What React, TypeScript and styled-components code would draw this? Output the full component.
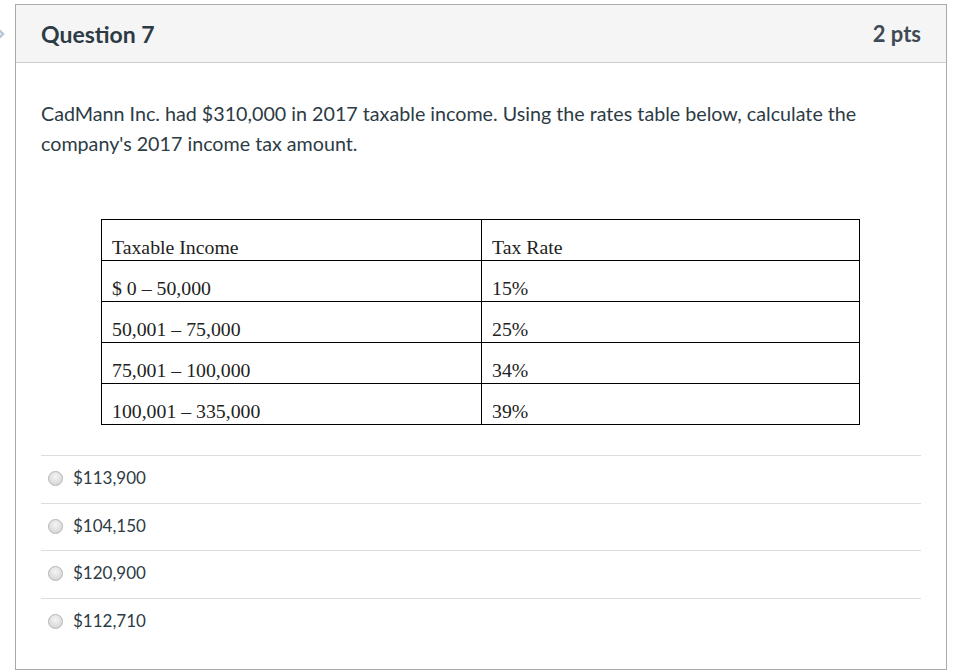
import React from "react";
import styled, { createGlobalStyle } from "styled-components";

const Global = createGlobalStyle`
  html, body { margin: 0; padding: 0; background: #fff; }
  body { font-family: Lato, "Open Sans", sans-serif; color: #2d3b45; }
`;

const Page = styled.div`
  position: relative;
  padding: 4px 19px 0 15px;
  width: 966px;
  box-sizing: border-box;
`;

const Marker = styled.svg`
  position: absolute;
  left: -5px;
  top: 26px;
`;

const Card = styled.div`
  border: 1px solid #aaaaaa;
  width: 932px;
  height: 666px;
  box-sizing: border-box;
  display: flex;
  flex-direction: column;
`;

const Header = styled.div`
  height: 57px;
  background: #f5f5f5;
  border-bottom: 1px solid #c7cdd1;
  display: flex;
  align-items: center;
  justify-content: space-between;
  padding: 0 25px;
  box-sizing: content-box;
`;

const Title = styled.h2`
  margin: 0;
  font-family: Lato, sans-serif;
  font-weight: 700;
  font-size: 23px;
  color: #2d3b45;
`;

const Points = styled.span`
  font-family: Lato, sans-serif;
  font-weight: 700;
  font-size: 22px;
  color: #3f4b54;
`;

const Body = styled.div`
  padding: 36px 25px 0 25px;
`;

const Prompt = styled.p`
  margin: 0;
  font-size: 19.7px;
  line-height: 30px;
  color: #2d3b45;
`;

const Table = styled.table`
  margin: 60px 0 0 60px;
  width: 759px;
  table-layout: fixed;
  border-collapse: collapse;
  font-family: "Liberation Serif", "Times New Roman", serif;
  font-size: 19.8px;
  color: #222;
`;

const Cell = styled.td<{ $w?: number }>`
  border: 1px solid #000;
  height: 37px;
  padding: 0 10px 3px 10px;
  vertical-align: bottom;
  width: ${(p) => (p.$w ? `${p.$w}px` : "auto")};
  line-height: 20px;
  box-sizing: content-box;
`;

const Answers = styled.div`
  margin-top: 30px;
  display: flex;
  flex-direction: column;
`;

const Answer = styled.label`
  display: flex;
  align-items: center;
  height: 46.7px;
  box-sizing: content-box;
  padding: 0 0 0 7px;
  border-top: 1px solid #dddddd;
  font-size: 17px;
  color: #2d3b45;
`;

const AnswerText = styled.span`
  position: relative;
  top: -2px;
`;

const Radio = styled.span`
  width: 13px;
  height: 13px;
  border-radius: 50%;
  border: 1px solid #b5b5b5;
  background: radial-gradient(circle at 50% 35%, #f4f4f4 0%, #dedede 60%, #cfcfcf 100%);
  margin-right: 10px;
  flex: none;
  position: relative;
  top: -1px;
`;

const rows = [
  ["Taxable Income", "Tax Rate"],
  ["$ 0 – 50,000", "15%"],
  ["50,001 – 75,000", "25%"],
  ["75,001 – 100,000", "34%"],
  ["100,001 – 335,000", "39%"],
];

const answers = ["$113,900", "$104,150", "$120,900", "$112,710"];

export default function App() {
  return (
    <>
      <Global />
      <Page>
        <Marker width="10" height="16" viewBox="0 0 10 16">
          <path d="M2 2 L8 8 L2 14" fill="none" stroke="#b8c8d8" strokeWidth="2.5" />
        </Marker>
        <Card>
          <Header>
            <Title>Question 7</Title>
            <Points>2 pts</Points>
          </Header>
          <Body>
            <Prompt>
              CadMann Inc. had $310,000 in 2017 taxable income. Using the rates table below, calculate the
              company's 2017 income tax amount.
            </Prompt>
            <Table>
              <tbody>
                {rows.map((r, i) => (
                  <tr key={i}>
                    <Cell $w={359}>{r[0]}</Cell>
                    <Cell>{r[1]}</Cell>
                  </tr>
                ))}
              </tbody>
            </Table>
            <Answers>
              {answers.map((a) => (
                <Answer key={a}>
                  <Radio />
                  <AnswerText>{a}</AnswerText>
                </Answer>
              ))}
            </Answers>
          </Body>
        </Card>
      </Page>
    </>
  );
}
